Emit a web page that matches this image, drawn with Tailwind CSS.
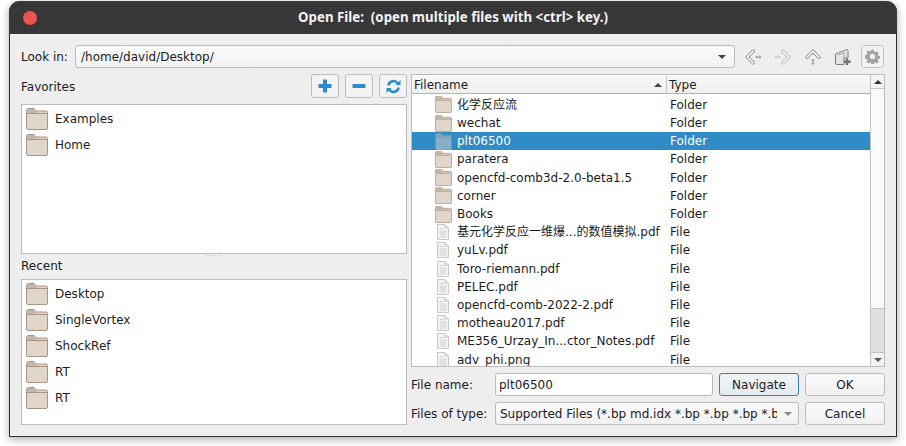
<!DOCTYPE html>
<html lang="zh-CN">
<head>
    <meta charset="UTF-8">
    <title>Open File</title>
    <script src="https://cdn.jsdelivr.net/npm/@tailwindcss/browser@4"></script>
</head>
<body class="bg-white w-[906px] h-[446px] overflow-hidden font-['DejaVu_Sans','Noto_Sans_CJK_SC',sans-serif] text-[12px] text-[#1c1c1c]">

<svg class="hidden">
    <symbol id="folder" viewBox="0 0 22 22">
        <path d="M0.5 4.5V2.5Q0.5 0.5 2.5 0.5H8L10.5 3H20Q21.5 3 21.5 4.5V20Q21.5 21.5 20 21.5H2Q0.5 21.5 0.5 20Z" fill="#dfd5ca" stroke="#a89482"/>
        <path d="M1 5V2.5Q1 1 2.5 1H8L10.5 3.5L11 5Z" fill="#c7b6a6"/>
        <path d="M1 5.5H21" stroke="#a89482" fill="none"/>
    </symbol>
    <symbol id="file" viewBox="0 0 12 16">
        <path d="M.5 .5H8L11.5 4V15.5H.5Z" fill="#f5f5f5" stroke="#c9c9c9"/>
        <path d="M8 .5V4H11.5" fill="#e2e2e2" stroke="#c9c9c9"/>
        <path d="M2.5 4.5H6.5M2.5 7H9.5M2.5 9H9.5M2.5 11H9.5M2.5 13H9.5" stroke="#cfcfcf" fill="none"/>
    </symbol>
</svg>

<!-- dialog window -->
<div class="ml-[9px] mt-px w-[888px] h-[436px] flex flex-col rounded-t-[11px] bg-[#eeeeee] border-x border-b border-[#2e2e2e] shadow-[0_2px_9px_rgba(0,0,0,0.35)]">
    <div class="h-[33px] shrink-0 -mx-px flex items-center justify-center relative rounded-t-[11px] bg-[#373737] text-[#f2f2f2] font-['Noto_Sans',sans-serif] font-bold text-[13.3px]">
        <span class="absolute left-[14px] top-[10px] w-[14px] h-[14px] rounded-full bg-[#ee5350]"></span>
        <span class="whitespace-pre">Open File:  (open multiple files with &lt;ctrl&gt; key.)</span>
    </div>

    <div class="flex-1 flex flex-col px-[11px]">
        <!-- look in row -->
        <div class="flex items-center h-[23px] mt-[11px] shrink-0">
            <span class="w-[54px]">Look in:</span>
            <div class="w-[660px] h-[23px] flex items-center justify-between pl-[5px] pr-[8px] rounded-[3px] border border-[#bcbcbc] bg-gradient-to-b from-[#fbfbfb] to-[#f2f2f2]">
                <span>/home/david/Desktop/</span>
                <span class="w-0 h-0 border-x-[4px] border-x-transparent border-t-[4px] border-t-[#444444]"></span>
            </div>
            <div class="flex items-center ml-[10px] gap-[14px]">
                <svg class="w-[16px] h-[16px]" viewBox="0 0 16 16" fill="none"><path d="M8 .5L.7 8L8 15.5L10 13.7L4 8L10 2.3Z" fill="#fafafa" stroke="#7f7f7f"/><circle cx="12" cy="8" r=".9" stroke="#8f8f8f"/><circle cx="14.8" cy="8" r=".9" stroke="#8f8f8f"/></svg>
                <svg class="w-[16px] h-[16px]" viewBox="0 0 16 16" fill="none"><path d="M8 .5L15.3 8L8 15.5L6 13.7L12 8L6 2.3Z" fill="#f6f6f6" stroke="#b4b4b4"/><circle cx="4" cy="8" r=".9" stroke="#c2c2c2"/><circle cx="1.2" cy="8" r=".9" stroke="#c2c2c2"/></svg>
                <svg class="w-[16px] h-[16px]" viewBox="0 0 16 16" fill="none"><path d="M.5 8L8 .7L15.5 8L13.7 10L8 4L2.3 10Z" fill="#fafafa" stroke="#7f7f7f"/><circle cx="8" cy="11.5" r=".9" stroke="#8f8f8f"/><circle cx="8" cy="14.5" r=".9" stroke="#8f8f8f"/></svg>
                <svg class="w-[16px] h-[16px]" viewBox="0 0 16 16" fill="none"><path d="M.5 5L11.5 .5Q13 .2 13 2V9H9V15.5H2Q.5 15.5 .5 14Z" fill="#e4e4e4" stroke="#808080"/><path d="M3 6L9 3.5V9" stroke="#a8a8a8"/><path d="M12 9.5V16M8.8 12.7H15.8" stroke="#747474" stroke-width="2.4"/></svg>
                <div class="w-[23px] h-[23px] -ml-[4px] flex items-center justify-center rounded-[3px] border border-[#c4c4c4] bg-[#f2f2f2]">
                    <svg class="w-[15px] h-[15px]" viewBox="0 0 16 16"><path fill="#a2a2a2" fill-rule="evenodd" d="M6.6.8h2.8l.4 2 1.3.6 1.8-1.1 2 2-1.1 1.8.6 1.3 2 .4v2.8l-2 .4-.6 1.3 1.1 1.8-2 2-1.8-1.1-1.3.6-.4 2H6.6l-.4-2-1.3-.6-1.8 1.1-2-2 1.1-1.8-.6-1.3-2-.4V7l2-.4.6-1.3-1.1-1.8 2-2 1.8 1.1 1.3-.6ZM8 5.2a3 3 0 1 0 0 6 3 3 0 0 0 0-6Z" transform="translate(.4 .1) scale(.95)"/></svg>
                </div>
            </div>
        </div>

        <!-- main area -->
        <div class="flex mt-[6px] h-[351px] shrink-0">
            <div class="w-[386px] flex flex-col shrink-0">
                <div class="flex items-center justify-between h-[24px] shrink-0">
                    <span class="pt-[2px]">Favorites</span>
                    <div class="flex gap-[6px]">
                        <div class="w-[28px] h-[24px] flex items-center justify-center rounded-[3px] border border-[#bdbdbd] bg-[#f3f3f3]">
                            <svg class="w-[14px] h-[14px]" viewBox="0 0 14 14"><path d="M7 0.5V13.5M0.5 7H13.5" stroke="#2f8ccb" stroke-width="4"/></svg>
                        </div>
                        <div class="w-[28px] h-[24px] flex items-center justify-center rounded-[3px] border border-[#bdbdbd] bg-[#f3f3f3]">
                            <svg class="w-[14px] h-[14px]" viewBox="0 0 14 14"><path d="M0.5 7H13.5" stroke="#2f8ccb" stroke-width="4"/></svg>
                        </div>
                        <div class="w-[28px] h-[24px] flex items-center justify-center rounded-[3px] border border-[#bdbdbd] bg-[#f3f3f3]">
                            <svg class="w-[15px] h-[15px]" viewBox="0 0 16 16" fill="none"><path d="M2.5 7A5.6 5.6 0 0 1 12.5 4.5" stroke="#2f8ccb" stroke-width="2.6"/><path d="M10 6.5H15.5V1Z" fill="#2f8ccb"/><path d="M13.5 9A5.6 5.6 0 0 1 3.5 11.5" stroke="#2f8ccb" stroke-width="2.6"/><path d="M6 9.5H.5V15Z" fill="#2f8ccb"/></svg>
                        </div>
                    </div>
                </div>
                <div class="mt-[6px] h-[150px] shrink-0 border border-[#bcbcbc] bg-white pl-[4px] pt-px">
                    <div class="flex items-center h-[26px] gap-[7px]"><svg class="w-[22px] h-[22px]"><use href="#folder"/></svg>Examples</div>
                    <div class="flex items-center h-[26px] gap-[7px]"><svg class="w-[22px] h-[22px]"><use href="#folder"/></svg>Home</div>
                </div>
                <div class="h-[3px] mt-px flex justify-center gap-[2px] shrink-0">
                    <span class="w-px h-px bg-[#bbbbbb]"></span><span class="w-px h-px bg-[#bbbbbb]"></span><span class="w-px h-px bg-[#bbbbbb]"></span><span class="w-px h-px bg-[#bbbbbb]"></span><span class="w-px h-px bg-[#bbbbbb]"></span><span class="w-px h-px bg-[#bbbbbb]"></span>
                </div>
                <div class="h-[21px] pb-[5px] flex items-center shrink-0">Recent</div>
                <div class="h-[146px] shrink-0 border border-[#bcbcbc] bg-white pl-[4px] pt-px">
                    <div class="flex items-center h-[26px] gap-[7px]"><svg class="w-[22px] h-[22px]"><use href="#folder"/></svg>Desktop</div>
                    <div class="flex items-center h-[26px] gap-[7px]"><svg class="w-[22px] h-[22px]"><use href="#folder"/></svg>SingleVortex</div>
                    <div class="flex items-center h-[26px] gap-[7px]"><svg class="w-[22px] h-[22px]"><use href="#folder"/></svg>ShockRef</div>
                    <div class="flex items-center h-[26px] gap-[7px]"><svg class="w-[22px] h-[22px]"><use href="#folder"/></svg>RT</div>
                    <div class="flex items-center h-[26px] gap-[7px]"><svg class="w-[22px] h-[22px]"><use href="#folder"/></svg>RT</div>
                </div>
            </div>

            <div class="ml-[4px] w-[474px] flex flex-col">
                <!-- file table -->
                <div class="h-[293px] shrink-0 flex border border-[#bcbcbc] bg-white overflow-hidden">
                    <div class="flex-1 min-w-0">
                        <div class="flex h-[19px] pt-px border-b border-[#b4b4b4] bg-gradient-to-b from-[#fafafa] to-[#efefef]">
                            <div class="w-[255px] flex items-center justify-between pl-[2px] pr-[4px] border-r border-[#c4c4c4]">
                                <span>Filename</span>
                                <span class="w-0 h-0 border-x-[4px] border-x-transparent border-b-[4px] border-b-[#444444]"></span>
                            </div>
                            <div class="flex-1 flex items-center pl-[2px]">Type</div>
                        </div>
                        <div class="h-[272px] pt-[1.3px] overflow-hidden">
                            <div class="flex items-center h-[18.2px] pt-px"><svg class="ml-[23px] w-[17px] h-[17px]"><use href="#folder"/></svg><span class="ml-[5px] w-[213px]">化学反应流</span>Folder</div>
                            <div class="flex items-center h-[18.2px] pt-px"><svg class="ml-[23px] w-[17px] h-[17px]"><use href="#folder"/></svg><span class="ml-[5px] w-[213px]">wechat</span>Folder</div>
                            <div class="flex items-center h-[18.2px] pt-px bg-[#308cc6] text-white relative"><svg class="ml-[23px] w-[17px] h-[17px]"><use href="#folder"/></svg><span class="absolute left-[23px] w-[17px] h-[17px] top-0 bg-[#308cc6]/50"></span><span class="ml-[5px] w-[213px]">plt06500</span>Folder</div>
                            <div class="flex items-center h-[18.2px] pt-px"><svg class="ml-[23px] w-[17px] h-[17px]"><use href="#folder"/></svg><span class="ml-[5px] w-[213px]">paratera</span>Folder</div>
                            <div class="flex items-center h-[18.2px] pt-px"><svg class="ml-[23px] w-[17px] h-[17px]"><use href="#folder"/></svg><span class="ml-[5px] w-[213px]">opencfd-comb3d-2.0-beta1.5</span>Folder</div>
                            <div class="flex items-center h-[18.2px] pt-px"><svg class="ml-[23px] w-[17px] h-[17px]"><use href="#folder"/></svg><span class="ml-[5px] w-[213px]">corner</span>Folder</div>
                            <div class="flex items-center h-[18.2px] pt-px"><svg class="ml-[23px] w-[17px] h-[17px]"><use href="#folder"/></svg><span class="ml-[5px] w-[213px]">Books</span>Folder</div>
                            <div class="flex items-center h-[18.2px] pt-px"><svg class="ml-[25px] w-[12px] h-[16px]"><use href="#file"/></svg><span class="ml-[8px] w-[213px] whitespace-nowrap">基元化学反应一维爆...的数值模拟.pdf</span>File</div>
                            <div class="flex items-center h-[18.2px] pt-px"><svg class="ml-[25px] w-[12px] h-[16px]"><use href="#file"/></svg><span class="ml-[8px] w-[213px]">yuLv.pdf</span>File</div>
                            <div class="flex items-center h-[18.2px] pt-px"><svg class="ml-[25px] w-[12px] h-[16px]"><use href="#file"/></svg><span class="ml-[8px] w-[213px]">Toro-riemann.pdf</span>File</div>
                            <div class="flex items-center h-[18.2px] pt-px"><svg class="ml-[25px] w-[12px] h-[16px]"><use href="#file"/></svg><span class="ml-[8px] w-[213px]">PELEC.pdf</span>File</div>
                            <div class="flex items-center h-[18.2px] pt-px"><svg class="ml-[25px] w-[12px] h-[16px]"><use href="#file"/></svg><span class="ml-[8px] w-[213px]">opencfd-comb-2022-2.pdf</span>File</div>
                            <div class="flex items-center h-[18.2px] pt-px"><svg class="ml-[25px] w-[12px] h-[16px]"><use href="#file"/></svg><span class="ml-[8px] w-[213px]">motheau2017.pdf</span>File</div>
                            <div class="flex items-center h-[18.2px] pt-px"><svg class="ml-[25px] w-[12px] h-[16px]"><use href="#file"/></svg><span class="ml-[8px] w-[213px]">ME356_Urzay_In...ctor_Notes.pdf</span>File</div>
                            <div class="flex items-center h-[18.2px] pt-px"><svg class="ml-[25px] w-[12px] h-[16px]"><use href="#file"/></svg><span class="ml-[8px] w-[213px]">adv_phi.png</span>File</div>
                        </div>
                    </div>
                    <div class="w-[14px] shrink-0 flex flex-col border-l border-[#c4c4c4] bg-[#fafafa]">
                        <div class="h-[14px] flex items-center justify-center border-b border-[#c4c4c4] bg-[#f2f2f2]"><span class="w-0 h-0 border-x-[4px] border-x-transparent border-b-[4px] border-b-[#333333]"></span></div>
                        <div class="flex-1"></div>
                        <div class="h-[44px] bg-[#e0e0e0] border-t border-[#c4c4c4]"></div>
                        <div class="h-[14px] flex items-center justify-center border-t border-[#c4c4c4] bg-[#f2f2f2]"><span class="w-0 h-0 border-x-[4px] border-x-transparent border-t-[4px] border-t-[#555555]"></span></div>
                    </div>
                </div>

                <!-- name and type rows -->
                <div class="grid grid-cols-[78px_304px_80px] gap-[6px] mt-[6px]">
                    <span class="flex items-center h-[23px]">File name:</span>
                    <div class="flex gap-[6px]">
                        <div class="w-[218px] h-[23px] flex items-center pl-[3px] rounded-[3px] border border-[#bcbcbc] bg-white">plt06500</div>
                        <div class="flex-1 h-[23px] flex items-center justify-center rounded-[3px] border border-[#3c7fa8] bg-gradient-to-b from-[#f0f4f7] to-[#e4ebf0]">Navigate</div>
                    </div>
                    <div class="h-[23px] flex items-center justify-center rounded-[3px] border border-[#bcbcbc] bg-gradient-to-b from-[#fafafa] to-[#f1f1f1]">OK</div>
                    <span class="flex items-center h-[23px]">Files of type:</span>
                    <div class="h-[23px] flex items-center justify-between pl-[4px] pr-[6px] rounded-[3px] border border-[#bcbcbc] bg-gradient-to-b from-[#fafafa] to-[#f1f1f1]">
                        <span class="w-[277px] overflow-hidden whitespace-nowrap">Supported Files (*.bp md.idx *.bp *.bp *.bp *.bp)</span>
                        <span class="w-0 h-0 border-x-[4px] border-x-transparent border-t-[4px] border-t-[#888888]"></span>
                    </div>
                    <div class="h-[23px] flex items-center justify-center rounded-[3px] border border-[#bcbcbc] bg-gradient-to-b from-[#fafafa] to-[#f1f1f1]">Cancel</div>
                </div>
            </div>
        </div>
    </div>
</div>
</body>
</html>
